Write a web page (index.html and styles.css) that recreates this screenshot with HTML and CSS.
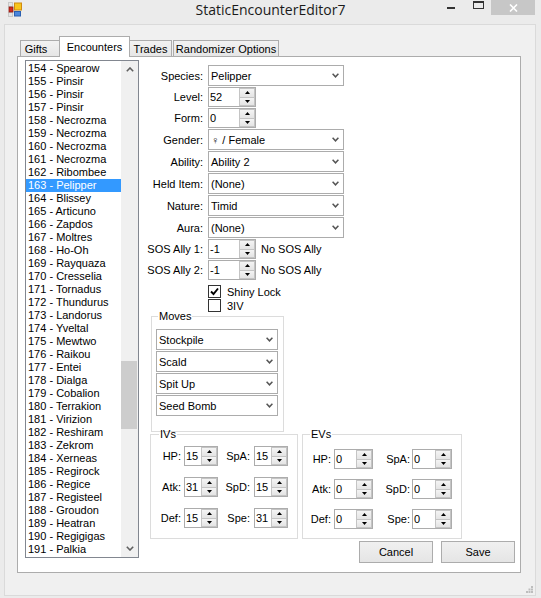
FILE: index.html
```html
<html>
    <head>
        <title> StaticEncounterEditor7 </title>
        <link rel="stylesheet" href="styles.css">
    </head>
    <body>
        <div class="window">
            <div class="titlebar">
                <div class="title-left">
                    <svg class="app-icon" width="14" height="15" viewBox="0 0 14 15">
                        <rect x="0.5" y="0.5" width="4" height="4" fill="#e4e4e4" stroke="#c8c8c8"/>
                        <rect x="0.5" y="10.5" width="4" height="4" fill="#e4e4e4" stroke="#c8c8c8"/>
                        <rect x="1" y="5" width="4" height="5" fill="#d42a1e" stroke="#8a1a12" stroke-width="0.8"/>
                        <rect x="6.5" y="1" width="7" height="7" fill="#f7c51c" stroke="#d08a10"/>
                        <rect x="6.5" y="9.5" width="6" height="4.5" fill="#4a86dc" stroke="#2a5fb0"/>
                    </svg>
                </div>
                <div class="title">StaticEncounterEditor7</div>
                <div class="caption-btns">
                    <div class="cap-min"></div>
                    <div class="cap-max"></div>
                    <div class="cap-close">
                        <svg width="9" height="8" viewBox="0 0 9 8"><path d="M1 0.5 L8 7.5 M8 0.5 L1 7.5" stroke="#fff" stroke-width="1.6"/></svg>
                    </div>
                </div>
            </div>

            <div class="client">
                <div class="tabstrip">
                    <div class="tab tab-gifts">Gifts</div>
                    <div class="tab tab-active">Encounters</div>
                    <div class="tab tab-trades">Trades</div>
                    <div class="tab tab-random">Randomizer Options</div>
                </div>

                <div class="tabpage">
                    <div class="listbox">
                        <div class="items">
                            <div class="item">154 - Spearow</div>
                            <div class="item">155 - Pinsir</div>
                            <div class="item">156 - Pinsir</div>
                            <div class="item">157 - Pinsir</div>
                            <div class="item">158 - Necrozma</div>
                            <div class="item">159 - Necrozma</div>
                            <div class="item">160 - Necrozma</div>
                            <div class="item">161 - Necrozma</div>
                            <div class="item">162 - Ribombee</div>
                            <div class="item selected">163 - Pelipper</div>
                            <div class="item">164 - Blissey</div>
                            <div class="item">165 - Articuno</div>
                            <div class="item">166 - Zapdos</div>
                            <div class="item">167 - Moltres</div>
                            <div class="item">168 - Ho-Oh</div>
                            <div class="item">169 - Rayquaza</div>
                            <div class="item">170 - Cresselia</div>
                            <div class="item">171 - Tornadus</div>
                            <div class="item">172 - Thundurus</div>
                            <div class="item">173 - Landorus</div>
                            <div class="item">174 - Yveltal</div>
                            <div class="item">175 - Mewtwo</div>
                            <div class="item">176 - Raikou</div>
                            <div class="item">177 - Entei</div>
                            <div class="item">178 - Dialga</div>
                            <div class="item">179 - Cobalion</div>
                            <div class="item">180 - Terrakion</div>
                            <div class="item">181 - Virizion</div>
                            <div class="item">182 - Reshiram</div>
                            <div class="item">183 - Zekrom</div>
                            <div class="item">184 - Xerneas</div>
                            <div class="item">185 - Regirock</div>
                            <div class="item">186 - Regice</div>
                            <div class="item">187 - Registeel</div>
                            <div class="item">188 - Groudon</div>
                            <div class="item">189 - Heatran</div>
                            <div class="item">190 - Regigigas</div>
                            <div class="item">191 - Palkia</div>
                        </div>
                        <div class="scrollbar">
                            <div class="sb-btn">
                                <svg width="8" height="5" viewBox="0 0 8 5"><path d="M0.8 4.2 L4 1 L7.2 4.2" fill="none" stroke="#606060" stroke-width="1.6"/></svg>
                            </div>
                            <div class="sb-track"><div class="sb-thumb"></div></div>
                            <div class="sb-btn">
                                <svg width="8" height="5" viewBox="0 0 8 5"><path d="M0.8 0.8 L4 4 L7.2 0.8" fill="none" stroke="#606060" stroke-width="1.6"/></svg>
                            </div>
                        </div>
                    </div>

                    <div class="editor">
                        <div class="field">
                            <div class="lbl">Species:</div>
                            <div class="combo combo-wide"><span>Pelipper</span><svg class="chev" width="7" height="5" viewBox="0 0 7 5"><path d="M0.6 0.8 L3.5 3.8 L6.4 0.8" fill="none" stroke="#555" stroke-width="1.5"/></svg></div>
                        </div>
                        <div class="field">
                            <div class="lbl">Level:</div>
                            <div class="num num-main"><span>52</span><div class="spin"><div class="spin-btn"><svg width="5" height="3" viewBox="0 0 5 3"><path d="M0 3 L2.5 0 L5 3 Z" fill="#000"/></svg></div><div class="spin-btn"><svg width="5" height="3" viewBox="0 0 5 3"><path d="M0 0 L2.5 3 L5 0 Z" fill="#000"/></svg></div></div></div>
                        </div>
                        <div class="field">
                            <div class="lbl">Form:</div>
                            <div class="num num-main"><span>0</span><div class="spin"><div class="spin-btn"><svg width="5" height="3" viewBox="0 0 5 3"><path d="M0 3 L2.5 0 L5 3 Z" fill="#000"/></svg></div><div class="spin-btn"><svg width="5" height="3" viewBox="0 0 5 3"><path d="M0 0 L2.5 3 L5 0 Z" fill="#000"/></svg></div></div></div>
                        </div>
                        <div class="field">
                            <div class="lbl">Gender:</div>
                            <div class="combo combo-wide"><span>♀ / Female</span><svg class="chev" width="7" height="5" viewBox="0 0 7 5"><path d="M0.6 0.8 L3.5 3.8 L6.4 0.8" fill="none" stroke="#555" stroke-width="1.5"/></svg></div>
                        </div>
                        <div class="field">
                            <div class="lbl">Ability:</div>
                            <div class="combo combo-wide"><span>Ability 2</span><svg class="chev" width="7" height="5" viewBox="0 0 7 5"><path d="M0.6 0.8 L3.5 3.8 L6.4 0.8" fill="none" stroke="#555" stroke-width="1.5"/></svg></div>
                        </div>
                        <div class="field">
                            <div class="lbl">Held Item:</div>
                            <div class="combo combo-wide"><span>(None)</span><svg class="chev" width="7" height="5" viewBox="0 0 7 5"><path d="M0.6 0.8 L3.5 3.8 L6.4 0.8" fill="none" stroke="#555" stroke-width="1.5"/></svg></div>
                        </div>
                        <div class="field">
                            <div class="lbl">Nature:</div>
                            <div class="combo combo-wide"><span>Timid</span><svg class="chev" width="7" height="5" viewBox="0 0 7 5"><path d="M0.6 0.8 L3.5 3.8 L6.4 0.8" fill="none" stroke="#555" stroke-width="1.5"/></svg></div>
                        </div>
                        <div class="field">
                            <div class="lbl">Aura:</div>
                            <div class="combo combo-wide"><span>(None)</span><svg class="chev" width="7" height="5" viewBox="0 0 7 5"><path d="M0.6 0.8 L3.5 3.8 L6.4 0.8" fill="none" stroke="#555" stroke-width="1.5"/></svg></div>
                        </div>
                        <div class="field">
                            <div class="lbl">SOS Ally 1:</div>
                            <div class="num num-main"><span>-1</span><div class="spin"><div class="spin-btn"><svg width="5" height="3" viewBox="0 0 5 3"><path d="M0 3 L2.5 0 L5 3 Z" fill="#000"/></svg></div><div class="spin-btn"><svg width="5" height="3" viewBox="0 0 5 3"><path d="M0 0 L2.5 3 L5 0 Z" fill="#000"/></svg></div></div></div>
                            <div class="note">No SOS Ally</div>
                        </div>
                        <div class="field">
                            <div class="lbl">SOS Ally 2:</div>
                            <div class="num num-main"><span>-1</span><div class="spin"><div class="spin-btn"><svg width="5" height="3" viewBox="0 0 5 3"><path d="M0 3 L2.5 0 L5 3 Z" fill="#000"/></svg></div><div class="spin-btn"><svg width="5" height="3" viewBox="0 0 5 3"><path d="M0 0 L2.5 3 L5 0 Z" fill="#000"/></svg></div></div></div>
                            <div class="note">No SOS Ally</div>
                        </div>

                        <div class="check first">
                            <div class="box"><svg width="11" height="11" viewBox="0 0 11 11"><path d="M2 5.5 L4.5 8 L9 2.5" fill="none" stroke="#000" stroke-width="1.9"/></svg></div>
                            <span>Shiny Lock</span>
                        </div>
                        <div class="check">
                            <div class="box"></div>
                            <span>3IV</span>
                        </div>

                        <fieldset class="group moves">
                            <legend>Moves</legend>
                            <div class="combo combo-move"><span>Stockpile</span><svg class="chev" width="7" height="5" viewBox="0 0 7 5"><path d="M0.6 0.8 L3.5 3.8 L6.4 0.8" fill="none" stroke="#555" stroke-width="1.5"/></svg></div>
                            <div class="combo combo-move"><span>Scald</span><svg class="chev" width="7" height="5" viewBox="0 0 7 5"><path d="M0.6 0.8 L3.5 3.8 L6.4 0.8" fill="none" stroke="#555" stroke-width="1.5"/></svg></div>
                            <div class="combo combo-move"><span>Spit Up</span><svg class="chev" width="7" height="5" viewBox="0 0 7 5"><path d="M0.6 0.8 L3.5 3.8 L6.4 0.8" fill="none" stroke="#555" stroke-width="1.5"/></svg></div>
                            <div class="combo combo-move"><span>Seed Bomb</span><svg class="chev" width="7" height="5" viewBox="0 0 7 5"><path d="M0.6 0.8 L3.5 3.8 L6.4 0.8" fill="none" stroke="#555" stroke-width="1.5"/></svg></div>
                        </fieldset>

                        <div class="stat-groups">
                            <fieldset class="group ivs">
                                <legend>IVs</legend>
                                <div class="stats">
                                    <div class="slbl">HP:</div>
                                    <div class="num"><span>15</span><div class="spin"><div class="spin-btn"><svg width="5" height="3" viewBox="0 0 5 3"><path d="M0 3 L2.5 0 L5 3 Z" fill="#000"/></svg></div><div class="spin-btn"><svg width="5" height="3" viewBox="0 0 5 3"><path d="M0 0 L2.5 3 L5 0 Z" fill="#000"/></svg></div></div></div>
                                    <div class="slbl">SpA:</div>
                                    <div class="num"><span>15</span><div class="spin"><div class="spin-btn"><svg width="5" height="3" viewBox="0 0 5 3"><path d="M0 3 L2.5 0 L5 3 Z" fill="#000"/></svg></div><div class="spin-btn"><svg width="5" height="3" viewBox="0 0 5 3"><path d="M0 0 L2.5 3 L5 0 Z" fill="#000"/></svg></div></div></div>
                                    <div class="slbl">Atk:</div>
                                    <div class="num"><span>31</span><div class="spin"><div class="spin-btn"><svg width="5" height="3" viewBox="0 0 5 3"><path d="M0 3 L2.5 0 L5 3 Z" fill="#000"/></svg></div><div class="spin-btn"><svg width="5" height="3" viewBox="0 0 5 3"><path d="M0 0 L2.5 3 L5 0 Z" fill="#000"/></svg></div></div></div>
                                    <div class="slbl">SpD:</div>
                                    <div class="num"><span>15</span><div class="spin"><div class="spin-btn"><svg width="5" height="3" viewBox="0 0 5 3"><path d="M0 3 L2.5 0 L5 3 Z" fill="#000"/></svg></div><div class="spin-btn"><svg width="5" height="3" viewBox="0 0 5 3"><path d="M0 0 L2.5 3 L5 0 Z" fill="#000"/></svg></div></div></div>
                                    <div class="slbl">Def:</div>
                                    <div class="num"><span>15</span><div class="spin"><div class="spin-btn"><svg width="5" height="3" viewBox="0 0 5 3"><path d="M0 3 L2.5 0 L5 3 Z" fill="#000"/></svg></div><div class="spin-btn"><svg width="5" height="3" viewBox="0 0 5 3"><path d="M0 0 L2.5 3 L5 0 Z" fill="#000"/></svg></div></div></div>
                                    <div class="slbl">Spe:</div>
                                    <div class="num"><span>31</span><div class="spin"><div class="spin-btn"><svg width="5" height="3" viewBox="0 0 5 3"><path d="M0 3 L2.5 0 L5 3 Z" fill="#000"/></svg></div><div class="spin-btn"><svg width="5" height="3" viewBox="0 0 5 3"><path d="M0 0 L2.5 3 L5 0 Z" fill="#000"/></svg></div></div></div>
                                </div>
                            </fieldset>
                            <fieldset class="group evs">
                                <legend>EVs</legend>
                                <div class="stats">
                                    <div class="slbl">HP:</div>
                                    <div class="num"><span>0</span><div class="spin"><div class="spin-btn"><svg width="5" height="3" viewBox="0 0 5 3"><path d="M0 3 L2.5 0 L5 3 Z" fill="#000"/></svg></div><div class="spin-btn"><svg width="5" height="3" viewBox="0 0 5 3"><path d="M0 0 L2.5 3 L5 0 Z" fill="#000"/></svg></div></div></div>
                                    <div class="slbl">SpA:</div>
                                    <div class="num"><span>0</span><div class="spin"><div class="spin-btn"><svg width="5" height="3" viewBox="0 0 5 3"><path d="M0 3 L2.5 0 L5 3 Z" fill="#000"/></svg></div><div class="spin-btn"><svg width="5" height="3" viewBox="0 0 5 3"><path d="M0 0 L2.5 3 L5 0 Z" fill="#000"/></svg></div></div></div>
                                    <div class="slbl">Atk:</div>
                                    <div class="num"><span>0</span><div class="spin"><div class="spin-btn"><svg width="5" height="3" viewBox="0 0 5 3"><path d="M0 3 L2.5 0 L5 3 Z" fill="#000"/></svg></div><div class="spin-btn"><svg width="5" height="3" viewBox="0 0 5 3"><path d="M0 0 L2.5 3 L5 0 Z" fill="#000"/></svg></div></div></div>
                                    <div class="slbl">SpD:</div>
                                    <div class="num"><span>0</span><div class="spin"><div class="spin-btn"><svg width="5" height="3" viewBox="0 0 5 3"><path d="M0 3 L2.5 0 L5 3 Z" fill="#000"/></svg></div><div class="spin-btn"><svg width="5" height="3" viewBox="0 0 5 3"><path d="M0 0 L2.5 3 L5 0 Z" fill="#000"/></svg></div></div></div>
                                    <div class="slbl">Def:</div>
                                    <div class="num"><span>0</span><div class="spin"><div class="spin-btn"><svg width="5" height="3" viewBox="0 0 5 3"><path d="M0 3 L2.5 0 L5 3 Z" fill="#000"/></svg></div><div class="spin-btn"><svg width="5" height="3" viewBox="0 0 5 3"><path d="M0 0 L2.5 3 L5 0 Z" fill="#000"/></svg></div></div></div>
                                    <div class="slbl">Spe:</div>
                                    <div class="num"><span>0</span><div class="spin"><div class="spin-btn"><svg width="5" height="3" viewBox="0 0 5 3"><path d="M0 3 L2.5 0 L5 3 Z" fill="#000"/></svg></div><div class="spin-btn"><svg width="5" height="3" viewBox="0 0 5 3"><path d="M0 0 L2.5 3 L5 0 Z" fill="#000"/></svg></div></div></div>
                                </div>
                            </fieldset>
                        </div>

                        <div class="buttons">
                            <button>Cancel</button>
                            <button>Save</button>
                        </div>
                    </div>
                </div>

                <div class="footer">
                    <svg class="grip" width="7" height="7" viewBox="0 0 7 7">
                        <rect x="5" y="0" width="2" height="2" fill="#bdbdbd"/>
                        <rect x="2.5" y="2.5" width="2" height="2" fill="#bdbdbd"/>
                        <rect x="5" y="2.5" width="2" height="2" fill="#bdbdbd"/>
                        <rect x="0" y="5" width="2" height="2" fill="#bdbdbd"/>
                        <rect x="2.5" y="5" width="2" height="2" fill="#bdbdbd"/>
                        <rect x="5" y="5" width="2" height="2" fill="#bdbdbd"/>
                    </svg>
                </div>
            </div>
        </div>
    </body>
</html>
```

FILE: styles.css
```css
body {
    margin: 0;
    background: #ebebeb;
    font-family: "Liberation Sans", Arial, sans-serif;
    font-size: 11px;
    color: #000;
}
.window {
    width: 541px;
    height: 598px;
    background: #ebebeb;
}
/* Title bar */
.titlebar {
    height: 24px;
    display: grid;
    grid-template-columns: 1fr auto 1fr;
}
.app-icon {
    display: block;
    margin: 2px 0 0 8px;
}
.title {
    font-family: "Open Sans", "Noto Sans", sans-serif;
    font-size: 14px;
    line-height: 20px;
    color: #1a1a1a;
}
.caption-btns {
    display: flex;
    justify-content: flex-end;
    align-items: flex-start;
}
.cap-min {
    width: 8px;
    height: 2px;
    background: #333;
    margin-top: 7px;
}
.cap-max {
    width: 10px;
    height: 7px;
    border: 1px solid #333;
    border-top-width: 2px;
    margin: 1px 0 0 18px;
    box-sizing: border-box;
    height: 8px;
    width: 11px;
}
.cap-close {
    width: 44px;
    height: 15px;
    background: #c7c7c7;
    margin: 0 6px 0 7px;
    display: flex;
    justify-content: center;
    align-items: center;
}
/* Client area */
.client {
    margin-left: 4px;
    width: 532px;
    height: 572px;
    box-sizing: border-box;
    border: 1px solid #dadada;
    background: #f0f0f0;
}
.tabstrip {
    height: 31px;
    box-sizing: border-box;
    padding-left: 15px;
    display: flex;
    align-items: flex-end;
}
.tab {
    height: 16px;
    box-sizing: border-box;
    border: 1px solid #acacac;
    border-bottom: none;
    background: linear-gradient(#f2f2f2, #e6e6e6);
    display: flex;
    justify-content: center;
    align-items: center;
    padding-top: 1px;
}
.tab-gifts {
    width: 40px;
    padding-right: 8px;
}
.tab-active {
    width: 71px;
    height: 21px;
    margin-left: -1px;
    margin-bottom: -1px;
    background: #fff;
    position: relative;
    z-index: 1;
    padding-top: 0;
    padding-bottom: 1px;
}
.tab-trades {
    width: 43px;
    margin-left: -1px;
}
.tab-random {
    width: 106px;
    margin-left: 1px;
}
.tabpage {
    margin-left: 12px;
    width: 504px;
    height: 517px;
    box-sizing: border-box;
    border: 1px solid #acacac;
    background: #fff;
    padding: 3px 0 0 7px;
    display: flex;
    align-items: flex-start;
}
/* List of encounters */
.listbox {
    width: 114px;
    height: 498px;
    box-sizing: border-box;
    border: 1px solid #828790;
    display: flex;
}
.items {
    flex: 1;
    padding-top: 1px;
}
.item {
    height: 13px;
    line-height: 13px;
    padding-left: 2px;
    white-space: nowrap;
}
.item.selected {
    background: #3399ff;
    color: #fff;
}
.scrollbar {
    width: 17px;
    background: #f0f0f0;
    display: flex;
    flex-direction: column;
}
.sb-btn {
    height: 17px;
    display: flex;
    justify-content: center;
    align-items: center;
}
.sb-track {
    flex: 1;
}
.sb-thumb {
    margin: 283px 1px 0 0;
    height: 68px;
    background: #cdcdcd;
}
/* Editor side */
.editor {
    flex: 1;
    padding: 5px 5px 0 0;
}
.field {
    display: flex;
    align-items: center;
    margin-bottom: 1px;
}
.lbl {
    width: 66px;
    padding-right: 2px;
    box-sizing: border-box;
    text-align: right;
    white-space: nowrap;
}
.combo {
    height: 21px;
    box-sizing: border-box;
    border: 1px solid #acacac;
    background: #fff;
    display: flex;
    align-items: center;
    padding-left: 2px;
}
.combo span {
    flex: 1;
}
.combo-wide {
    width: 136px;
    margin-left: 3px;
}
.chev {
    margin-right: 4px;
}
.num {
    height: 20px;
    box-sizing: border-box;
    border: 1px solid #acacac;
    background: #fff;
    display: flex;
}
.num span {
    flex: 1;
    line-height: 18px;
    padding-left: 1px;
}
.num-main {
    width: 48px;
    margin-left: 3px;
}
.spin {
    width: 16px;
    display: flex;
    flex-direction: column;
}
.spin-btn {
    flex: 1;
    box-sizing: border-box;
    border: 1px solid #c4c4c4;
    background: linear-gradient(#f4f4f4, #e4e4e4);
    display: flex;
    justify-content: center;
    align-items: center;
}
.spin-btn + .spin-btn {
    border-top: none;
}
.note {
    margin-left: 5px;
}
/* Checkboxes */
.check {
    display: flex;
    align-items: center;
    height: 13px;
    margin: 1px 0 0 69px;
}
.check.first {
    margin-top: 5px;
}
.box {
    width: 13px;
    height: 13px;
    box-sizing: border-box;
    border: 1px solid #333;
    background: #fff;
    display: flex;
    justify-content: center;
    align-items: center;
    margin-right: 6px;
}
/* Group boxes */
.group {
    margin: 0;
    padding: 0;
    border: 1px solid #dcdcdc;
    box-sizing: border-box;
}
.group legend {
    padding: 0 1px;
    margin-left: 7px;
    line-height: 13px;
}
.moves {
    width: 133px;
    margin: -2px 0 0 12px;
    padding: 6px 5px 14px 4px;
}
.moves legend {
    margin-left: 2px;
}
.combo-move {
    width: 122px;
    margin-bottom: 1px;
}
.stat-groups {
    display: flex;
    margin: -4px 0 0 11px;
}
.ivs {
    width: 148px;
    padding: 5px 0 10px 1px;
}
.evs {
    width: 160px;
    margin-left: 4px;
    padding: 8px 0 0 0;
}
.stats {
    display: grid;
    grid-template-columns: 32px 34px 36px 34px;
    row-gap: 11px;
    align-items: center;
}
.evs .stats {
    grid-template-columns: 31px 39px 39px 40px;
    row-gap: 10px;
}
.slbl {
    text-align: right;
    padding-right: 3px;
}
.ivs .slbl:nth-child(4n+3) {
    padding-right: 4px;
}
.evs .slbl:nth-child(4n+3) {
    padding-right: 2px;
}
/* Buttons */
.buttons {
    display: flex;
    justify-content: flex-end;
    gap: 8px;
    margin-top: 2px;
}
button {
    width: 74px;
    height: 22px;
    border: 1px solid #acacac;
    background: linear-gradient(#f0f0f0, #e5e5e5);
    font-family: "Liberation Sans", Arial, sans-serif;
    font-size: 11px;
    color: #000;
    padding: 0;
}
.footer {
    height: 22px;
    display: flex;
    justify-content: flex-end;
    align-items: flex-end;
}
.grip {
    margin: 0 2px 2px 0;
}
```
